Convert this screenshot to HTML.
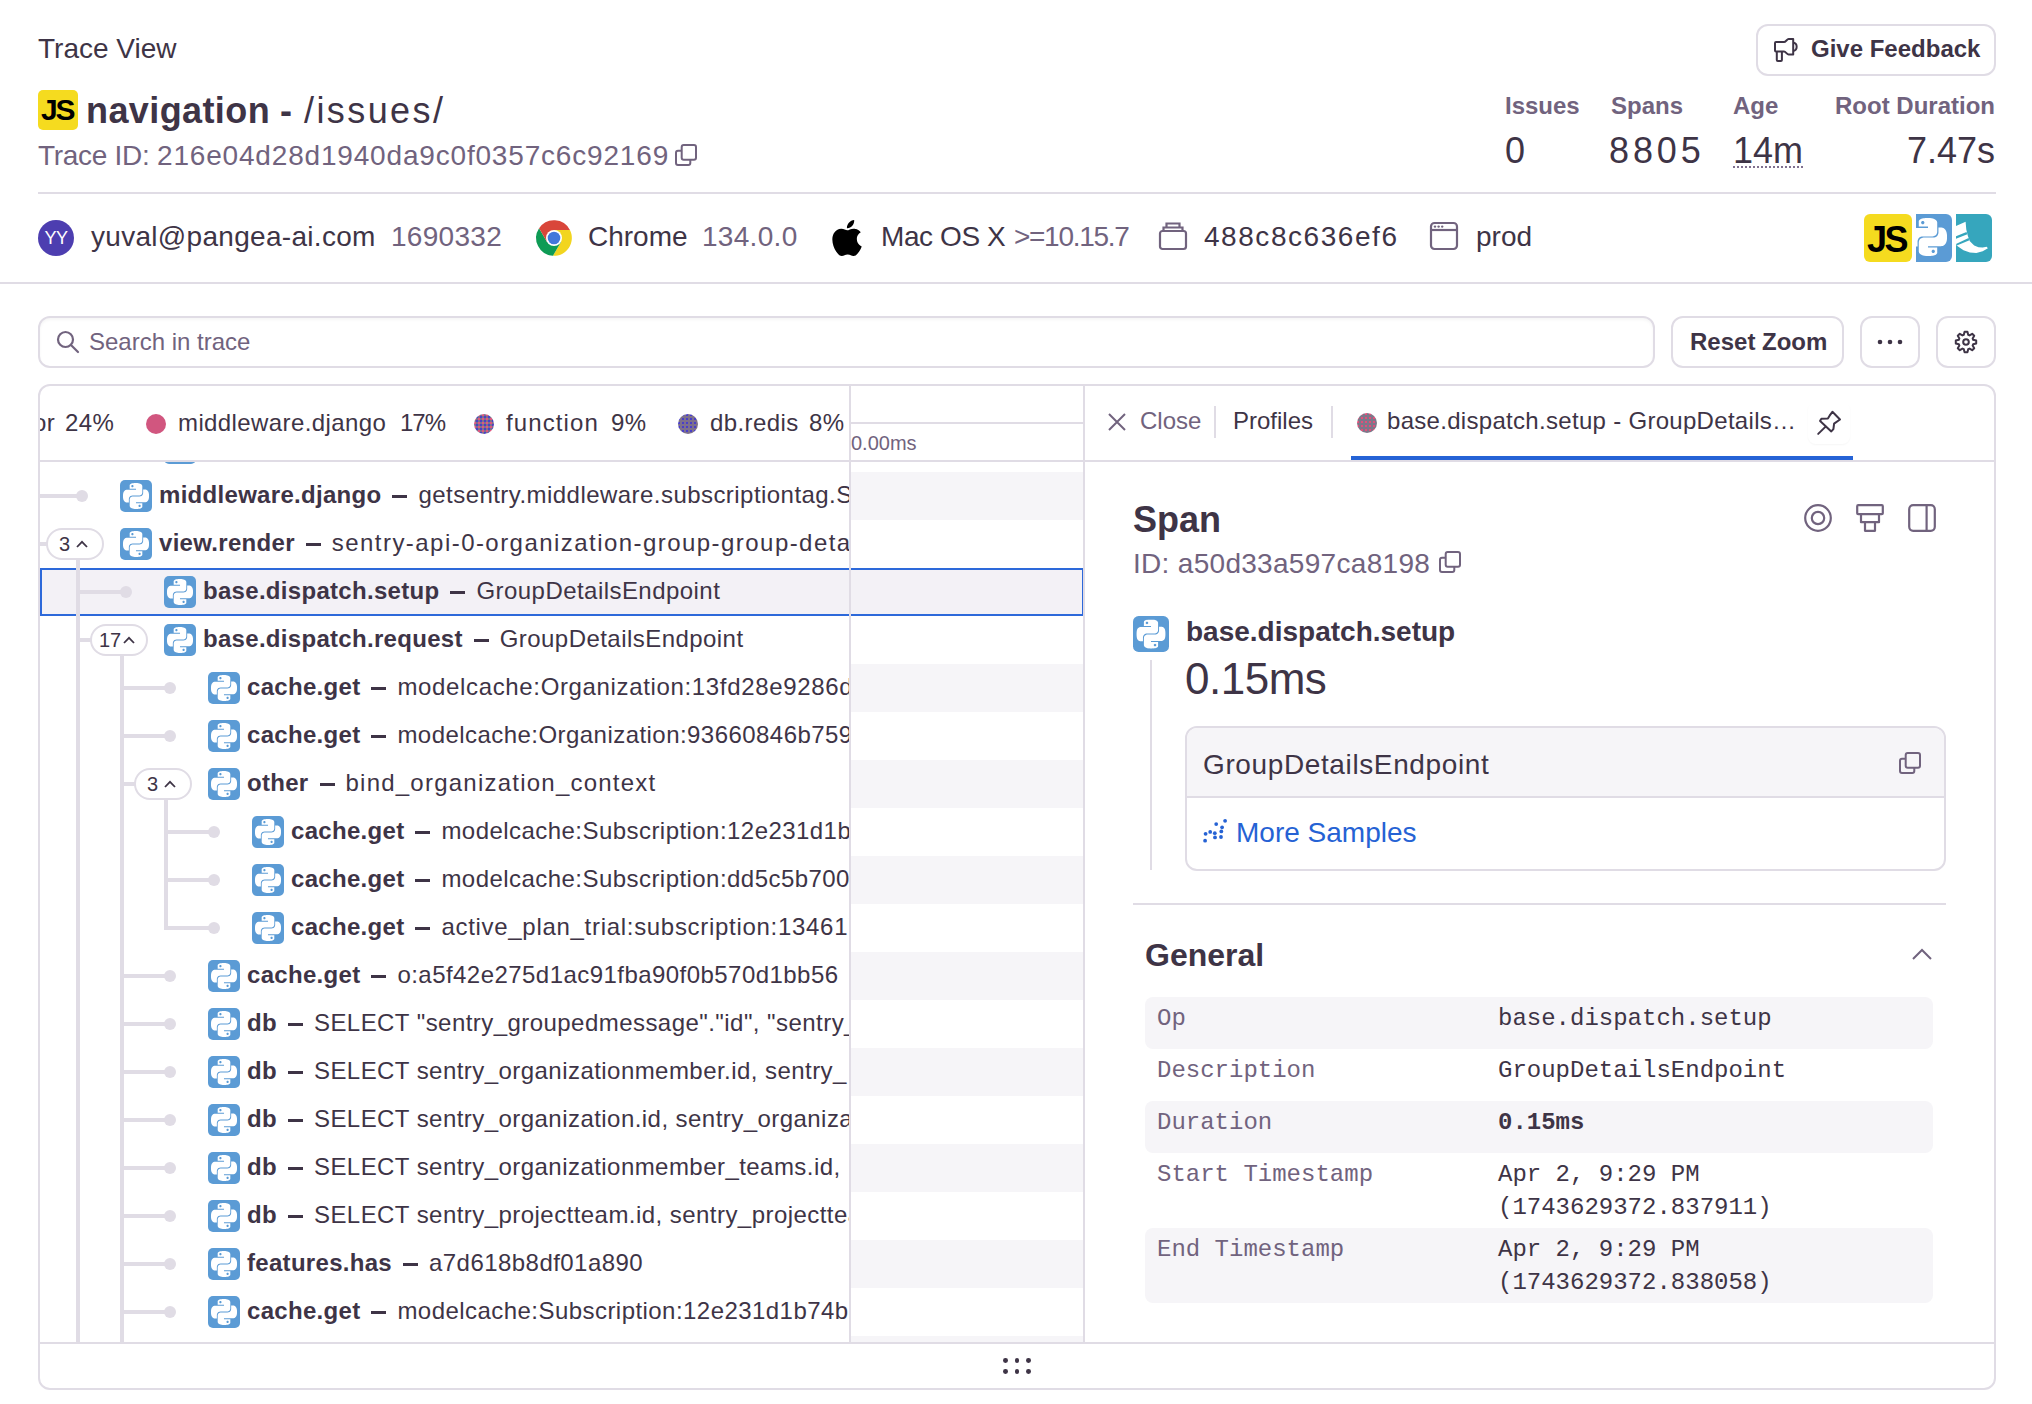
<!DOCTYPE html>
<html><head><meta charset="utf-8">
<style>
*{box-sizing:border-box;margin:0;padding:0}
html,body{width:2032px;height:1404px;overflow:hidden;background:#fff}
body{position:relative;font-family:"Liberation Sans",sans-serif;color:#3E3446}
.a{position:absolute;white-space:nowrap;line-height:1}
.sub{color:#71637E}
.b{font-weight:bold}
.mono{font-family:"Liberation Mono",monospace}
.hl{position:absolute;background:#E0DCE5}
.btn{position:absolute;border:2px solid #E0DCE5;border-radius:12px;background:#fff}
svg{position:absolute;overflow:visible}
</style></head><body>
<svg width="0" height="0" style="position:absolute">
<defs>
<symbol id="py" viewBox="0 0 24 24"><path fill="#fff" d="M14.25.18l.9.2.73.26.59.3.45.32.34.34.25.34.16.33.1.3.04.26.02.2-.01.13V8.5l-.05.63-.13.55-.21.46-.26.38-.3.31-.33.25-.35.19-.35.14-.33.1-.3.07-.26.04-.21.02H8.77l-.69.05-.59.14-.5.22-.41.27-.33.32-.27.35-.2.36-.15.37-.1.35-.07.32-.04.27-.02.21v3.06H3.17l-.21-.03-.28-.07-.32-.12-.35-.18-.36-.26-.36-.36-.35-.46-.32-.59-.28-.73-.21-.88-.14-1.050-.05-1.23.06-1.22.16-1.04.24-.87.32-.71.36-.57.4-.44.42-.33.42-.24.4-.16.36-.1.32-.05.24-.01h.16l.06.01h8.16v-.83H6.18l-.01-2.75-.02-.37.05-.34.11-.31.17-.28.25-.26.31-.23.38-.2.44-.18.51-.15.58-.12.64-.1.71-.06.77-.04.84-.02 1.27.05zm-6.3 1.98l-.23.33-.08.41.08.41.23.34.33.22.41.09.41-.09.33-.22.23-.34.08-.41-.08-.41-.23-.33-.33-.22-.41-.09-.41.09zm13.09 3.95l.28.06.32.12.35.18.36.27.36.35.35.47.32.59.28.73.21.88.14 1.04.05 1.23-.06 1.23-.16 1.04-.24.86-.32.71-.36.57-.4.45-.42.33-.42.24-.4.16-.36.09-.32.05-.24.02-.16-.01h-8.22v.82h5.84l.01 2.76.02.36-.05.34-.11.31-.17.29-.25.25-.31.24-.38.2-.44.17-.51.15-.58.13-.64.09-.71.07-.77.04-.84.01-1.27-.04-1.070-.14-.9-.2-.73-.25-.59-.3-.45-.33-.34-.34-.25-.34-.16-.33-.1-.3-.04-.25-.02-.2.01-.13v-5.34l.05-.64.13-.54.21-.46.26-.38.3-.32.33-.24.35-.2.35-.14.33-.1.3-.06.26-.04.21-.02.13-.01h5.840l.69-.05.59-.14.5-.21.41-.28.33-.32.27-.35.2-.36.15-.36.1-.35.07-.32.04-.28.02-.21V6.07h2.09l.14.01zm-6.47 14.25l-.23.33-.08.41.08.41.23.33.33.23.41.08.41-.08.33-.23.23-.33.08-.41-.08-.41-.23-.33-.33-.23-.41-.08-.41.08z"/></symbol>
<symbol id="pyicon" viewBox="0 0 32 32"><rect width="32" height="32" rx="5" fill="#5B9BD5"/><use href="#py" x="3" y="3" width="26" height="26"/></symbol>
<pattern id="pfn" width="4" height="4" patternUnits="userSpaceOnUse"><rect width="4" height="4" fill="#7D708C"/><rect width="2" height="2" fill="#DE5680"/><rect x="2" y="2" width="2" height="2" fill="#4A3FC8"/></pattern>
<pattern id="prd" width="4" height="4" patternUnits="userSpaceOnUse"><rect width="4" height="4" fill="#7D708C"/><rect width="2" height="2" fill="#4A3FC8"/></pattern>
<pattern id="ptab" width="4" height="4" patternUnits="userSpaceOnUse"><rect width="4" height="4" fill="#7F7689"/><rect width="2" height="2" fill="#E0507A"/></pattern>
<symbol id="copy" viewBox="0 0 24 24"><g fill="none" stroke="currentColor" stroke-width="2"><rect x="7.7" y="2.9" width="14.3" height="14.8" rx="2"/><path d="M7.7 8.7H4a2 2 0 0 0-2 2V21a2 2 0 0 0 2 2h10.3a2 2 0 0 0 2-2v-3.3"/></g></symbol>
</defs></svg>

<!-- ============ HEADER ============ -->
<div class="a" style="left:38px;top:35px;font-size:28px">Trace View</div>

<div class="btn" style="left:1756px;top:24px;width:240px;height:52px"></div>
<svg style="left:1774px;top:38px" width="24" height="24" viewBox="0 0 24 24"><g fill="none" stroke="#3E3446" stroke-width="2" stroke-linejoin="round"><path d="M2 4h8c1.8 0 3-3 4.6-3h4.6v15.6h-4.6c-1.6 0-2.8-3-4.6-3H2a1 1 0 0 1-1-1V5a1 1 0 0 1 1-1z"/><path d="M2.8 13.5V22a1 1 0 0 0 1 1h3.1a1 1 0 0 0 1-1v-8.5"/><path d="M19.2 4.5a4.4 4.4 0 0 1 0 8.6"/></g></svg>
<div class="a b" style="left:1811px;top:37px;font-size:24px">Give Feedback</div>

<!-- title -->
<div style="position:absolute;left:38px;top:90px;width:40px;height:40px;background:#F5DB1F;border-radius:5px"></div>
<div class="a b" style="left:41px;top:95px;font-size:30px;color:#000;letter-spacing:-2.2px;transform:scaleY(1.0)">JS</div>
<div class="a" style="left:86px;top:93px;font-size:36px"><span class="b" style="letter-spacing:0.4px">navigation</span> <span class="b">-</span> <span style="letter-spacing:2.4px;margin-left:2px">/issues/</span></div>
<div class="a sub" style="left:38px;top:142px;font-size:28px;letter-spacing:-0.3px">Trace ID:</div><div class="a sub" style="left:157px;top:142px;font-size:28px;letter-spacing:0.82px">216e04d28d1940da9c0f0357c6c92169</div>
<svg style="left:674px;top:142px;color:#71637E" width="24" height="24"><use href="#copy" width="24" height="24"/></svg>

<!-- stats -->
<div class="a b sub" style="left:1505px;top:94px;font-size:24px">Issues</div>
<div class="a b sub" style="left:1611px;top:94px;font-size:24px">Spans</div>
<div class="a b sub" style="left:1733px;top:94px;font-size:24px">Age</div>
<div class="a b sub" style="right:37px;top:94px;font-size:24px">Root Duration</div>
<div class="a" style="left:1505px;top:133px;font-size:36px">0</div>
<div class="a" style="left:1609px;top:133px;font-size:36px;letter-spacing:3.9px">8805</div>
<div class="a" style="left:1733px;top:133px;font-size:36px;border-bottom:2px dotted #80708F;padding-bottom:0;height:35px">14m</div>
<div class="a" style="right:37px;top:133px;font-size:36px">7.47s</div>

<div class="hl" style="left:38px;top:192px;width:1958px;height:2px"></div>

<!-- tags row -->
<div style="position:absolute;left:38px;top:220px;width:36px;height:36px;border-radius:50%;background:#4D3EB0"></div>
<div class="a" style="left:38px;top:229px;width:36px;text-align:center;font-size:18px;color:#fff;letter-spacing:-0.5px">YY</div>
<div class="a" style="left:91px;top:223px;font-size:28px;letter-spacing:0.3px">yuval@pangea-ai.com</div>
<div class="a sub" style="left:391px;top:223px;font-size:28px;letter-spacing:0.3px">1690332</div>

<svg style="left:536px;top:220px" width="36" height="36" viewBox="0 0 48 48"><path fill="#F2D51F" d="M24.00 13.30L45.26 13.30A23.8 23.8 0 0 1 22.64 47.76L33.27 29.35L24 24Z"/><path fill="#0E9B55" d="M33.27 29.35L22.64 47.76A23.8 23.8 0 0 1 4.10 10.94L14.73 29.35L24 24Z"/><path fill="#D9463A" d="M14.73 29.35L4.10 10.94A23.8 23.8 0 0 1 45.26 13.30L24.00 13.30L24 24Z"/><circle cx="24" cy="24" r="10.7" fill="#fff"/><circle cx="24" cy="24" r="8.4" fill="#4277DB"/></svg>
<div class="a" style="left:588px;top:223px;font-size:28px">Chrome</div>
<div class="a sub" style="left:702px;top:223px;font-size:28px;letter-spacing:0.3px">134.0.0</div>

<svg style="left:832px;top:220px" width="30" height="36" viewBox="2 0 20 24"><path fill="#000" d="M12.152 6.896c-.948 0-2.415-1.078-3.960-1.040-2.040.027-3.910 1.183-4.961 3.014-2.117 3.675-.546 9.103 1.519 12.090 1.013 1.454 2.208 3.090 3.792 3.039 1.520-.065 2.090-.987 3.935-.987 1.831 0 2.350.987 3.960.948 1.637-.026 2.676-1.480 3.676-2.948 1.156-1.688 1.636-3.325 1.662-3.415-.039-.013-3.182-1.221-3.220-4.857-.026-3.040 2.480-4.494 2.597-4.559-1.429-2.090-3.623-2.324-4.390-2.376-2-.156-3.675 1.090-4.610 1.090zM15.530 3.830c.843-1.012 1.400-2.427 1.245-3.830-1.207.052-2.662.805-3.532 1.818-.780.896-1.454 2.338-1.273 3.714 1.338.104 2.715-.688 3.559-1.701"/></svg>
<div class="a" style="left:881px;top:223px;font-size:28px;letter-spacing:-0.4px">Mac OS X</div>
<div class="a sub" style="left:1014px;top:223px;font-size:28px;letter-spacing:-1.3px">&gt;=10.15.7</div>

<svg style="left:1159px;top:222px" width="28" height="28" viewBox="0 0 28 28"><g fill="none" stroke="#71637E" stroke-width="2.2"><rect x="1" y="9" width="26" height="18" rx="2.5"/><path d="M4.5 9V5.5h19V9M7.5 5.5V1.5h13v4"/></g></svg>
<div class="a" style="left:1204px;top:223px;font-size:28px;letter-spacing:1.55px">488c8c636ef6</div>

<svg style="left:1430px;top:222px" width="28" height="28" viewBox="0 0 28 28"><g fill="none" stroke="#71637E" stroke-width="2.2"><rect x="1" y="1" width="26" height="26" rx="3.5"/><path d="M1 8h26"/></g><g fill="#71637E"><circle cx="5" cy="4.6" r="1.2"/><circle cx="8.6" cy="4.6" r="1.2"/><circle cx="12.2" cy="4.6" r="1.2"/></g></svg>
<div class="a" style="left:1476px;top:223px;font-size:28px">prod</div>

<!-- platform icons -->
<div style="position:absolute;left:1956px;top:214px;width:36px;height:48px;border-radius:0 6px 6px 0;background:#36A6BD;overflow:hidden"><svg style="left:0;top:0" width="36" height="48" viewBox="0 0 36 48"><path fill="#fff" d="M0.0 11.9 L9.6 7.7 L10.3 15.4 L11.8 21.8 L13.9 27.3 L18.2 31.6 L22.5 33.3 L26.7 33.5 L30.6 32.7 L31.9 34.2 L26.7 37.2 L20.3 38.9 L13.9 38.4 L7.5 36.3 L2.0 32.5 L0.0 30.8 Z"/><path fill="#36A6BD" d="M0.0 22.2 L10.5 17.9 L11.4 20.3 L0.0 24.8 Z"/><path fill="#36A6BD" d="M0.0 29.9 L12.6 23.9 L13.5 26.3 L0.8 31.6 Z"/></svg></div>
<div style="position:absolute;left:1916px;top:214px;width:36px;height:48px;border-radius:0 6px 6px 0;background:#5B9BD5;overflow:hidden"><svg style="left:-7.3px;top:4px" width="38" height="38"><use href="#py" x="0" y="0" width="38" height="38"/></svg></div>
<div style="position:absolute;left:1864px;top:214px;width:48px;height:48px;border-radius:6px;background:#F5DB1F"></div>
<div class="a b" style="left:1867px;top:222px;font-size:36px;color:#000;letter-spacing:-2.5px">JS</div>
<div class="hl" style="left:0;top:282px;width:2032px;height:2px"></div>

<!-- ============ SEARCH BAR ============ -->
<div class="btn" style="left:38px;top:316px;width:1617px;height:52px;box-shadow:inset 0 2px 3px rgba(0,0,0,0.04)"></div>
<svg style="left:56px;top:330px" width="24" height="24" viewBox="0 0 24 24"><g fill="none" stroke="#71637E" stroke-width="2.2" stroke-linecap="round"><circle cx="9.5" cy="9.5" r="7.5"/><path d="M15 15l7 7"/></g></svg>
<div class="a sub" style="left:89px;top:330px;font-size:24px">Search in trace</div>

<div class="btn" style="left:1671px;top:316px;width:173px;height:52px"></div>
<div class="a b" style="left:1690px;top:330px;font-size:24px">Reset Zoom</div>
<div class="btn" style="left:1860px;top:316px;width:60px;height:52px"></div>
<svg style="left:1876px;top:338px" width="28" height="8"><circle cx="4" cy="4" r="2.3" fill="#3E3446"/><circle cx="14" cy="4" r="2.3" fill="#3E3446"/><circle cx="24" cy="4" r="2.3" fill="#3E3446"/></svg>
<div class="btn" style="left:1936px;top:316px;width:60px;height:52px"></div>
<svg style="left:1954px;top:330px" width="24" height="24" viewBox="0 0 24 24"><g fill="none" stroke="#3E3446" stroke-width="2" stroke-linejoin="round"><path d="M9.81 4.83 L10.57 1.80 L13.43 1.80 L14.19 4.83 L15.52 5.38 L18.20 3.77 L20.23 5.80 L18.62 8.48 L19.17 9.81 L22.20 10.57 L22.20 13.43 L19.17 14.19 L18.62 15.52 L20.23 18.20 L18.20 20.23 L15.52 18.62 L14.19 19.17 L13.43 22.20 L10.57 22.20 L9.81 19.17 L8.48 18.62 L5.80 20.23 L3.77 18.20 L5.38 15.52 L4.83 14.19 L1.80 13.43 L1.80 10.57 L4.83 9.81 L5.38 8.48 L3.77 5.80 L5.80 3.77 L8.48 5.38Z"/><circle cx="12" cy="12" r="2.8"/></g></svg>

<div style="position:absolute;left:38px;top:384px;width:1958px;height:1006px;border:2px solid #E0DCE5;border-radius:12px;background:#fff"></div>
<div style="position:absolute;left:851px;top:462px;width:232px;height:880px;overflow:hidden">
<div style="position:absolute;left:0;top:10px;width:232px;height:48px;background:#F6F5F8"></div>
<div style="position:absolute;left:0;top:106px;width:232px;height:48px;background:#F6F5F8"></div>
<div style="position:absolute;left:0;top:202px;width:232px;height:48px;background:#F6F5F8"></div>
<div style="position:absolute;left:0;top:298px;width:232px;height:48px;background:#F6F5F8"></div>
<div style="position:absolute;left:0;top:394px;width:232px;height:48px;background:#F6F5F8"></div>
<div style="position:absolute;left:0;top:490px;width:232px;height:48px;background:#F6F5F8"></div>
<div style="position:absolute;left:0;top:586px;width:232px;height:48px;background:#F6F5F8"></div>
<div style="position:absolute;left:0;top:682px;width:232px;height:48px;background:#F6F5F8"></div>
<div style="position:absolute;left:0;top:778px;width:232px;height:48px;background:#F6F5F8"></div>
<div style="position:absolute;left:0;top:874px;width:232px;height:48px;background:#F6F5F8"></div>
</div>
<div style="position:absolute;left:40px;top:568px;width:1044px;height:48px;background:#F3F1F6;border:2px solid #2D69DA"></div>
<div class="hl" style="left:849px;top:386px;width:2px;height:956px"></div>
<div class="hl" style="left:1083px;top:386px;width:2px;height:956px"></div>
<div class="hl" style="left:40px;top:460px;width:1954px;height:2px"></div>
<div class="hl" style="left:851px;top:422px;width:232px;height:2px"></div>
<div class="hl" style="left:40px;top:1342px;width:1954px;height:2px"></div>
<div style="position:absolute;left:1003.0px;top:1357.8px;width:4.8px;height:4.8px;border-radius:50%;background:#3E3446"></div>
<div style="position:absolute;left:1003.0px;top:1369.2px;width:4.8px;height:4.8px;border-radius:50%;background:#3E3446"></div>
<div style="position:absolute;left:1014.6px;top:1357.8px;width:4.8px;height:4.8px;border-radius:50%;background:#3E3446"></div>
<div style="position:absolute;left:1014.6px;top:1369.2px;width:4.8px;height:4.8px;border-radius:50%;background:#3E3446"></div>
<div style="position:absolute;left:1026.2px;top:1357.8px;width:4.8px;height:4.8px;border-radius:50%;background:#3E3446"></div>
<div style="position:absolute;left:1026.2px;top:1369.2px;width:4.8px;height:4.8px;border-radius:50%;background:#3E3446"></div>
<div style="position:absolute;left:40px;top:386px;width:809px;height:74px;overflow:hidden">
<div class="a" style="left:-7px;top:24.7px;font-size:24px;letter-spacing:0.4px;color:#3E3446">or</div>
<div class="a" style="left:25px;top:24.7px;font-size:24px;letter-spacing:0.4px;color:#3E3446">24%</div>
<div style="position:absolute;left:106px;top:28px;width:20px;height:20px;border-radius:50%;background:#D1567F"></div>
<div class="a" style="left:138px;top:24.7px;font-size:24px;letter-spacing:0.4px;color:#3E3446">middleware.django</div>
<div class="a" style="left:360px;top:24.7px;font-size:24px;letter-spacing:0.4px;color:#3E3446"><span style="letter-spacing:-1px">17%</span></div>
<svg style="left:434px;top:28px" width="20" height="20"><circle cx="10" cy="10" r="10" fill="url(#pfn)"/></svg>
<div class="a" style="left:466px;top:24.7px;font-size:24px;letter-spacing:0.4px;color:#3E3446"><span style="letter-spacing:1.1px">function</span></div>
<div class="a" style="left:571px;top:24.7px;font-size:24px;letter-spacing:0.4px;color:#3E3446">9%</div>
<svg style="left:638px;top:28px" width="20" height="20"><circle cx="10" cy="10" r="10" fill="url(#prd)"/></svg>
<div class="a" style="left:670px;top:24.7px;font-size:24px;letter-spacing:0.4px;color:#3E3446">db.redis</div>
<div class="a" style="left:769px;top:24.7px;font-size:24px;letter-spacing:0.4px;color:#3E3446">8%</div>
</div>
<div class="a sub" style="left:851px;top:433.1px;font-size:20px">0.00ms</div>
<div style="position:absolute;left:40px;top:462px;width:809px;height:880px;overflow:hidden">
<div style="position:absolute;left:36px;top:98px;width:4px;height:782px;background:#E0DCE5"></div>
<div style="position:absolute;left:80px;top:194px;width:4px;height:686px;background:#E0DCE5"></div>
<div style="position:absolute;left:124px;top:338px;width:4px;height:130px;background:#E0DCE5"></div>
<div style="position:absolute;left:36px;top:-16px;width:50px;height:4px;background:#E0DCE5"></div>
<div style="position:absolute;left:80px;top:-20px;width:12px;height:12px;border-radius:50%;background:#E0DCE5"></div>
<svg style="left:124px;top:-30px" width="32" height="32"><use href="#pyicon" width="32" height="32"/></svg>
<div style="position:absolute;left:0px;top:32px;width:42px;height:4px;background:#E0DCE5"></div>
<div style="position:absolute;left:36px;top:28px;width:12px;height:12px;border-radius:50%;background:#E0DCE5"></div>
<svg style="left:80px;top:18px" width="32" height="32"><use href="#pyicon" width="32" height="32"/></svg>
<div class="a" style="left:119px;top:21.0px;font-size:24px;color:#3E3446"><span class="b" style="letter-spacing:0.3px">middleware.django</span><span style="display:inline-block;width:15px;height:3px;background:#3E3446;margin:0 11px 5px 11px"></span><span style="letter-spacing:0.45px">getsentry.middleware.subscriptiontag.SubscriptionMiddleware</span></div>
<div style="position:absolute;left:0px;top:80px;width:8px;height:4px;background:#E0DCE5"></div>
<div style="position:absolute;left:6px;top:66px;width:58px;height:32px;border:2px solid #E0DCE5;border-radius:16px;background:#fff"></div>
<div class="a" style="left:19px;top:72.1px;font-size:20px;color:#3E3446">3</div>
<svg style="left:36px;top:78px" width="12" height="8" viewBox="0 0 12 8"><path d="M1 7L6 1.8 11 7" fill="none" stroke="#3E3446" stroke-width="1.8"/></svg>
<svg style="left:80px;top:66px" width="32" height="32"><use href="#pyicon" width="32" height="32"/></svg>
<div class="a" style="left:119px;top:69.0px;font-size:24px;color:#3E3446"><span class="b" style="letter-spacing:0.3px">view.render</span><span style="display:inline-block;width:15px;height:3px;background:#3E3446;margin:0 11px 5px 11px"></span><span style="letter-spacing:1.45px">sentry-api-0-organization-group-group-details</span></div>
<div style="position:absolute;left:36px;top:128px;width:50px;height:4px;background:#E0DCE5"></div>
<div style="position:absolute;left:80px;top:124px;width:12px;height:12px;border-radius:50%;background:#E0DCE5"></div>
<svg style="left:124px;top:114px" width="32" height="32"><use href="#pyicon" width="32" height="32"/></svg>
<div class="a" style="left:163px;top:117.0px;font-size:24px;color:#3E3446"><span class="b" style="letter-spacing:0.3px">base.dispatch.setup</span><span style="display:inline-block;width:15px;height:3px;background:#3E3446;margin:0 11px 5px 11px"></span><span style="letter-spacing:0.45px">GroupDetailsEndpoint</span></div>
<div style="position:absolute;left:38px;top:176px;width:14px;height:4px;background:#E0DCE5"></div>
<div style="position:absolute;left:50px;top:162px;width:58px;height:32px;border:2px solid #E0DCE5;border-radius:16px;background:#fff"></div>
<div class="a" style="left:59px;top:168.1px;font-size:20px;color:#3E3446">17</div>
<svg style="left:83px;top:174px" width="12" height="8" viewBox="0 0 12 8"><path d="M1 7L6 1.8 11 7" fill="none" stroke="#3E3446" stroke-width="1.8"/></svg>
<svg style="left:124px;top:162px" width="32" height="32"><use href="#pyicon" width="32" height="32"/></svg>
<div class="a" style="left:163px;top:165.0px;font-size:24px;color:#3E3446"><span class="b" style="letter-spacing:0.3px">base.dispatch.request</span><span style="display:inline-block;width:15px;height:3px;background:#3E3446;margin:0 11px 5px 11px"></span><span style="letter-spacing:0.45px">GroupDetailsEndpoint</span></div>
<div style="position:absolute;left:80px;top:224px;width:50px;height:4px;background:#E0DCE5"></div>
<div style="position:absolute;left:124px;top:220px;width:12px;height:12px;border-radius:50%;background:#E0DCE5"></div>
<svg style="left:168px;top:210px" width="32" height="32"><use href="#pyicon" width="32" height="32"/></svg>
<div class="a" style="left:207px;top:213.0px;font-size:24px;color:#3E3446"><span class="b" style="letter-spacing:0.3px">cache.get</span><span style="display:inline-block;width:15px;height:3px;background:#3E3446;margin:0 11px 5px 11px"></span><span style="letter-spacing:0.65px">modelcache:Organization:13fd28e9286d4bfa</span></div>
<div style="position:absolute;left:80px;top:272px;width:50px;height:4px;background:#E0DCE5"></div>
<div style="position:absolute;left:124px;top:268px;width:12px;height:12px;border-radius:50%;background:#E0DCE5"></div>
<svg style="left:168px;top:258px" width="32" height="32"><use href="#pyicon" width="32" height="32"/></svg>
<div class="a" style="left:207px;top:261.0px;font-size:24px;color:#3E3446"><span class="b" style="letter-spacing:0.3px">cache.get</span><span style="display:inline-block;width:15px;height:3px;background:#3E3446;margin:0 11px 5px 11px"></span><span style="letter-spacing:0.45px">modelcache:Organization:93660846b7594a4b</span></div>
<div style="position:absolute;left:82px;top:320px;width:14px;height:4px;background:#E0DCE5"></div>
<div style="position:absolute;left:94px;top:306px;width:58px;height:32px;border:2px solid #E0DCE5;border-radius:16px;background:#fff"></div>
<div class="a" style="left:107px;top:312.1px;font-size:20px;color:#3E3446">3</div>
<svg style="left:124px;top:318px" width="12" height="8" viewBox="0 0 12 8"><path d="M1 7L6 1.8 11 7" fill="none" stroke="#3E3446" stroke-width="1.8"/></svg>
<svg style="left:168px;top:306px" width="32" height="32"><use href="#pyicon" width="32" height="32"/></svg>
<div class="a" style="left:207px;top:309.0px;font-size:24px;color:#3E3446"><span class="b" style="letter-spacing:0.3px">other</span><span style="display:inline-block;width:15px;height:3px;background:#3E3446;margin:0 11px 5px 11px"></span><span style="letter-spacing:1.23px">bind_organization_context</span></div>
<div style="position:absolute;left:124px;top:368px;width:50px;height:4px;background:#E0DCE5"></div>
<div style="position:absolute;left:168px;top:364px;width:12px;height:12px;border-radius:50%;background:#E0DCE5"></div>
<svg style="left:212px;top:354px" width="32" height="32"><use href="#pyicon" width="32" height="32"/></svg>
<div class="a" style="left:251px;top:357.0px;font-size:24px;color:#3E3446"><span class="b" style="letter-spacing:0.3px">cache.get</span><span style="display:inline-block;width:15px;height:3px;background:#3E3446;margin:0 11px 5px 11px"></span><span style="letter-spacing:0.45px">modelcache:Subscription:12e231d1b74b3c5d</span></div>
<div style="position:absolute;left:124px;top:416px;width:50px;height:4px;background:#E0DCE5"></div>
<div style="position:absolute;left:168px;top:412px;width:12px;height:12px;border-radius:50%;background:#E0DCE5"></div>
<svg style="left:212px;top:402px" width="32" height="32"><use href="#pyicon" width="32" height="32"/></svg>
<div class="a" style="left:251px;top:405.0px;font-size:24px;color:#3E3446"><span class="b" style="letter-spacing:0.3px">cache.get</span><span style="display:inline-block;width:15px;height:3px;background:#3E3446;margin:0 11px 5px 11px"></span><span style="letter-spacing:0.45px">modelcache:Subscription:dd5c5b700c1e4a2f</span></div>
<div style="position:absolute;left:124px;top:464px;width:50px;height:4px;background:#E0DCE5"></div>
<div style="position:absolute;left:168px;top:460px;width:12px;height:12px;border-radius:50%;background:#E0DCE5"></div>
<svg style="left:212px;top:450px" width="32" height="32"><use href="#pyicon" width="32" height="32"/></svg>
<div class="a" style="left:251px;top:453.0px;font-size:24px;color:#3E3446"><span class="b" style="letter-spacing:0.3px">cache.get</span><span style="display:inline-block;width:15px;height:3px;background:#3E3446;margin:0 11px 5px 11px"></span><span style="letter-spacing:0.7px">active_plan_trial:subscription:1346172</span></div>
<div style="position:absolute;left:80px;top:512px;width:50px;height:4px;background:#E0DCE5"></div>
<div style="position:absolute;left:124px;top:508px;width:12px;height:12px;border-radius:50%;background:#E0DCE5"></div>
<svg style="left:168px;top:498px" width="32" height="32"><use href="#pyicon" width="32" height="32"/></svg>
<div class="a" style="left:207px;top:501.0px;font-size:24px;color:#3E3446"><span class="b" style="letter-spacing:0.3px">cache.get</span><span style="display:inline-block;width:15px;height:3px;background:#3E3446;margin:0 11px 5px 11px"></span><span style="letter-spacing:0.45px">o:a5f42e275d1ac91fba90f0b570d1bb56</span></div>
<div style="position:absolute;left:80px;top:560px;width:50px;height:4px;background:#E0DCE5"></div>
<div style="position:absolute;left:124px;top:556px;width:12px;height:12px;border-radius:50%;background:#E0DCE5"></div>
<svg style="left:168px;top:546px" width="32" height="32"><use href="#pyicon" width="32" height="32"/></svg>
<div class="a" style="left:207px;top:549.0px;font-size:24px;color:#3E3446"><span class="b" style="letter-spacing:0.3px">db</span><span style="display:inline-block;width:15px;height:3px;background:#3E3446;margin:0 11px 5px 11px"></span><span style="letter-spacing:0.45px">SELECT "sentry_groupedmessage"."id", "sentry_groupedmessage"."project_id"</span></div>
<div style="position:absolute;left:80px;top:608px;width:50px;height:4px;background:#E0DCE5"></div>
<div style="position:absolute;left:124px;top:604px;width:12px;height:12px;border-radius:50%;background:#E0DCE5"></div>
<svg style="left:168px;top:594px" width="32" height="32"><use href="#pyicon" width="32" height="32"/></svg>
<div class="a" style="left:207px;top:597.0px;font-size:24px;color:#3E3446"><span class="b" style="letter-spacing:0.3px">db</span><span style="display:inline-block;width:15px;height:3px;background:#3E3446;margin:0 11px 5px 11px"></span><span style="letter-spacing:0.45px">SELECT sentry_organizationmember.id, sentry_</span></div>
<div style="position:absolute;left:80px;top:656px;width:50px;height:4px;background:#E0DCE5"></div>
<div style="position:absolute;left:124px;top:652px;width:12px;height:12px;border-radius:50%;background:#E0DCE5"></div>
<svg style="left:168px;top:642px" width="32" height="32"><use href="#pyicon" width="32" height="32"/></svg>
<div class="a" style="left:207px;top:645.0px;font-size:24px;color:#3E3446"><span class="b" style="letter-spacing:0.3px">db</span><span style="display:inline-block;width:15px;height:3px;background:#3E3446;margin:0 11px 5px 11px"></span><span style="letter-spacing:0.45px">SELECT sentry_organization.id, sentry_organization.name</span></div>
<div style="position:absolute;left:80px;top:704px;width:50px;height:4px;background:#E0DCE5"></div>
<div style="position:absolute;left:124px;top:700px;width:12px;height:12px;border-radius:50%;background:#E0DCE5"></div>
<svg style="left:168px;top:690px" width="32" height="32"><use href="#pyicon" width="32" height="32"/></svg>
<div class="a" style="left:207px;top:693.0px;font-size:24px;color:#3E3446"><span class="b" style="letter-spacing:0.3px">db</span><span style="display:inline-block;width:15px;height:3px;background:#3E3446;margin:0 11px 5px 11px"></span><span style="letter-spacing:0.45px">SELECT sentry_organizationmember_teams.id,</span></div>
<div style="position:absolute;left:80px;top:752px;width:50px;height:4px;background:#E0DCE5"></div>
<div style="position:absolute;left:124px;top:748px;width:12px;height:12px;border-radius:50%;background:#E0DCE5"></div>
<svg style="left:168px;top:738px" width="32" height="32"><use href="#pyicon" width="32" height="32"/></svg>
<div class="a" style="left:207px;top:741.0px;font-size:24px;color:#3E3446"><span class="b" style="letter-spacing:0.3px">db</span><span style="display:inline-block;width:15px;height:3px;background:#3E3446;margin:0 11px 5px 11px"></span><span style="letter-spacing:0.45px">SELECT sentry_projectteam.id, sentry_projectteam.project_id</span></div>
<div style="position:absolute;left:80px;top:800px;width:50px;height:4px;background:#E0DCE5"></div>
<div style="position:absolute;left:124px;top:796px;width:12px;height:12px;border-radius:50%;background:#E0DCE5"></div>
<svg style="left:168px;top:786px" width="32" height="32"><use href="#pyicon" width="32" height="32"/></svg>
<div class="a" style="left:207px;top:789.0px;font-size:24px;color:#3E3446"><span class="b" style="letter-spacing:0.3px">features.has</span><span style="display:inline-block;width:15px;height:3px;background:#3E3446;margin:0 11px 5px 11px"></span><span style="letter-spacing:0.45px">a7d618b8df01a890</span></div>
<div style="position:absolute;left:80px;top:848px;width:50px;height:4px;background:#E0DCE5"></div>
<div style="position:absolute;left:124px;top:844px;width:12px;height:12px;border-radius:50%;background:#E0DCE5"></div>
<svg style="left:168px;top:834px" width="32" height="32"><use href="#pyicon" width="32" height="32"/></svg>
<div class="a" style="left:207px;top:837.0px;font-size:24px;color:#3E3446"><span class="b" style="letter-spacing:0.3px">cache.get</span><span style="display:inline-block;width:15px;height:3px;background:#3E3446;margin:0 11px 5px 11px"></span><span style="letter-spacing:0.45px">modelcache:Subscription:12e231d1b74b3c5d</span></div>
<div style="position:absolute;left:80px;top:896px;width:50px;height:4px;background:#E0DCE5"></div>
<div style="position:absolute;left:124px;top:892px;width:12px;height:12px;border-radius:50%;background:#E0DCE5"></div>
<svg style="left:168px;top:882px" width="32" height="32"><use href="#pyicon" width="32" height="32"/></svg>
<div class="a" style="left:207px;top:885.0px;font-size:24px;color:#3E3446"><span class="b" style="letter-spacing:0.3px">cache.get</span><span style="display:inline-block;width:15px;height:3px;background:#3E3446;margin:0 11px 5px 11px"></span><span style="letter-spacing:0.45px">modelcache:Subscription:12e231d1b74b3c5d</span></div>
</div>
<svg style="left:1108px;top:413px" width="18" height="18" viewBox="0 0 18 18"><path d="M1 1L17 17M17 1L1 17" stroke="#71637E" stroke-width="2"/></svg>
<div class="a sub" style="left:1140px;top:409.4px;font-size:24px">Close</div>
<div class="hl" style="left:1214px;top:406px;width:2px;height:32px"></div>
<div class="a" style="left:1233px;top:409.4px;font-size:24px">Profiles</div>
<div class="hl" style="left:1331px;top:406px;width:2px;height:32px"></div>
<svg style="left:1357px;top:413px" width="20" height="20"><circle cx="10" cy="10" r="10" fill="url(#ptab)"/></svg>
<div class="a" style="left:1387px;top:409.4px;font-size:24px;letter-spacing:0.3px">base.dispatch.setup - GroupDetails…</div>
<div style="position:absolute;left:1808px;top:402px;width:42px;height:42px;border-radius:8px;box-shadow:0 1px 2px rgba(0,0,0,0.04)"></div>
<svg style="left:1817px;top:412px" width="24" height="24" viewBox="0 0 24 24"><g fill="none" stroke="#3E3446" stroke-width="2" stroke-linejoin="round" stroke-linecap="round"><path d="M15.4 -0.2L23 7.5 17.1 11.6 16.4 17.1 14.3 19.4 3.1 8.9 4.4 6.8 10.9 6.5 12.6 3.7Z"/><path d="M8.6 14.6L1.2 21.9"/></g></svg>
<div style="position:absolute;left:1351px;top:456px;width:502px;height:4px;background:#2563D6"></div>
<div class="a b" style="left:1133px;top:502.0px;font-size:36px">Span</div>
<svg style="left:1804px;top:504px" width="28" height="28" viewBox="0 0 28 28"><g fill="none" stroke="#71637E" stroke-width="2.2"><circle cx="14" cy="14" r="12.8"/><circle cx="14" cy="14" r="6.2"/></g></svg>
<svg style="left:1856px;top:504px" width="28" height="28" viewBox="0 0 28 28"><g fill="none" stroke="#71637E" stroke-width="2.2" stroke-linejoin="round"><rect x="1.2" y="1.2" width="25.6" height="9" rx="1"/><path d="M5 10.2v8h18v-8M9 18.2v8.6h10v-8.6"/></g></svg>
<svg style="left:1908px;top:504px" width="28" height="28" viewBox="0 0 28 28"><g fill="none" stroke="#71637E" stroke-width="2.2"><rect x="1.2" y="1.2" width="25.6" height="25.6" rx="4"/><path d="M18.6 1.2v25.6"/></g></svg>
<div class="a sub" style="left:1133px;top:549.6px;font-size:28px;letter-spacing:0.3px">ID: a50d33a597ca8198</div>
<svg style="left:1438px;top:549px;color:#71637E" width="24" height="24"><use href="#copy" width="24" height="24"/></svg>
<svg style="left:1133px;top:616px" width="36" height="36"><use href="#pyicon" width="36" height="36"/></svg>
<div class="a b" style="left:1186px;top:617.8px;font-size:28px">base.dispatch.setup</div>
<div class="hl" style="left:1150px;top:660px;width:2px;height:210px"></div>
<div class="a" style="left:1185px;top:656.6px;font-size:44px;letter-spacing:-0.5px">0.15ms</div>
<div style="position:absolute;left:1185px;top:726px;width:761px;height:145px;border:2px solid #E0DCE5;border-radius:12px;overflow:hidden;background:#fff"><div style="position:absolute;left:0;top:0;width:100%;height:70px;background:#F6F5F8;border-bottom:2px solid #E0DCE5"></div></div>
<div class="a" style="left:1203px;top:750.6px;font-size:28px;letter-spacing:0.62px">GroupDetailsEndpoint</div>
<svg style="left:1898px;top:750px;color:#71637E" width="24" height="24"><use href="#copy" width="24" height="24"/></svg>
<svg style="left:1203px;top:819px" width="24" height="24" viewBox="0 0 24 24"><circle cx="2.1" cy="21.7" r="1.9" fill="#2562D4"/><circle cx="2.6" cy="14.8" r="1.9" fill="#2562D4"/><circle cx="7.2" cy="12.9" r="1.9" fill="#2562D4"/><circle cx="11.8" cy="14.2" r="1.9" fill="#2562D4"/><circle cx="12" cy="18.4" r="1.9" fill="#2562D4"/><circle cx="18" cy="18" r="1.9" fill="#2562D4"/><circle cx="18.3" cy="12.4" r="1.9" fill="#2562D4"/><circle cx="19.1" cy="8.3" r="1.9" fill="#2562D4"/><circle cx="13.2" cy="5.1" r="1.9" fill="#2562D4"/><circle cx="22.1" cy="1.8" r="1.9" fill="#2562D4"/></svg>
<div class="a" style="left:1236px;top:819.3px;font-size:28px;color:#2562D4;letter-spacing:0px">More Samples</div>
<div class="hl" style="left:1133px;top:903px;width:813px;height:2px"></div>
<div class="a b" style="left:1145px;top:938.7px;font-size:32px">General</div>
<svg style="left:1912px;top:949px" width="20" height="11" viewBox="0 0 20 11"><path d="M1 10L10 1l9 9" fill="none" stroke="#71637E" stroke-width="2"/></svg>
<div style="position:absolute;left:1145px;top:997px;width:788px;height:52px;background:#F6F5F8;border-radius:8px"></div>
<div class="a mono sub" style="left:1157px;top:1006.8px;font-size:24px">Op</div>
<div class="a mono" style="left:1498px;top:1006.8px;font-size:24px;">base.dispatch.setup</div>
<div class="a mono sub" style="left:1157px;top:1058.8px;font-size:24px">Description</div>
<div class="a mono" style="left:1498px;top:1058.8px;font-size:24px;">GroupDetailsEndpoint</div>
<div style="position:absolute;left:1145px;top:1101px;width:788px;height:52px;background:#F6F5F8;border-radius:8px"></div>
<div class="a mono sub" style="left:1157px;top:1110.8px;font-size:24px">Duration</div>
<div class="a mono" style="left:1498px;top:1110.8px;font-size:24px;font-weight:bold;">0.15ms</div>
<div class="a mono sub" style="left:1157px;top:1162.8px;font-size:24px">Start Timestamp</div>
<div class="a mono" style="left:1498px;top:1162.8px;font-size:24px;">Apr 2, 9:29 PM</div>
<div class="a mono" style="left:1498px;top:1196.3px;font-size:24px;">(1743629372.837911)</div>
<div style="position:absolute;left:1145px;top:1228px;width:788px;height:75px;background:#F6F5F8;border-radius:8px"></div>
<div class="a mono sub" style="left:1157px;top:1237.8px;font-size:24px">End Timestamp</div>
<div class="a mono" style="left:1498px;top:1237.8px;font-size:24px;">Apr 2, 9:29 PM</div>
<div class="a mono" style="left:1498px;top:1271.3px;font-size:24px;">(1743629372.838058)</div>
</body></html>
